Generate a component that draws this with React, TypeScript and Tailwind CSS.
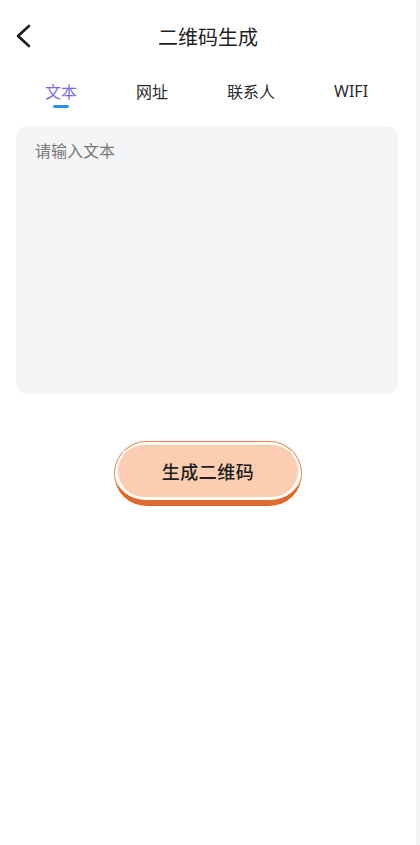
import React from "react";

const font = {
  fontFamily: '"Noto Sans CJK SC", "Noto Sans", sans-serif',
};

export default function App() {
  return (
    <div
      className="relative w-[420px] h-[845px] bg-white overflow-hidden"
      style={font}
    >
      <div className="absolute right-0 top-0 h-full w-[4px] bg-[#f3f3f3]" />
      {/* header */}
      <div className="relative h-[74px] flex items-start">
        <div className="pl-[14px] pt-[24px]">
          <svg width="18" height="24" viewBox="0 0 18 24" fill="none">
            <path
              d="M15 2 L4 12 L15 22"
              stroke="#1a1a1a"
              strokeWidth="2.6"
              strokeLinecap="round"
              strokeLinejoin="round"
            />
          </svg>
        </div>
        <div className="absolute left-0 right-[4px] top-[22px] text-center text-[20px] leading-[30px] text-[#1f1f1f]">
          二维码生成
        </div>
      </div>
      {/* tabs */}
      <div className="flex pl-[45px] gap-[59px] h-[52px] text-[16px] leading-[34px] text-[#2b2b2b]">
        <div className="flex flex-col items-center">
          <span className="text-[#7a6cf2]">文本</span>
          <div className="mt-[-3px] w-[16px] h-[3px] rounded-full bg-[#2e8ff5]" />
        </div>
        <span>网址</span>
        <span>联系人</span>
        <span className="font-[Roboto,sans-serif]" style={{ fontFamily: '"Noto Sans", sans-serif' }}>WIFI</span>
      </div>
      {/* textarea */}
      <div className="mx-[16px] w-[382px] h-[268px] rounded-[12px] bg-[#f4f5f7] px-[19px] pt-[11px]">
        <div className="text-[16px] leading-[26px] text-[#777777]">请输入文本</div>
      </div>
      {/* button */}
      <div className="flex justify-center mt-[47px] pr-[4px]">
        <div className="w-[188px] h-[65px] rounded-full bg-white border-[1.5px] border-[#ec8a52] border-b-[6px] border-b-[#df6b2c] p-[3px]">
          <div className="h-full w-full rounded-full bg-[#fccdb1] flex items-center justify-center text-[18px] font-medium text-[#1e1e1e] tracking-[0.5px]">
            生成二维码
          </div>
        </div>
      </div>
    </div>
  );
}
